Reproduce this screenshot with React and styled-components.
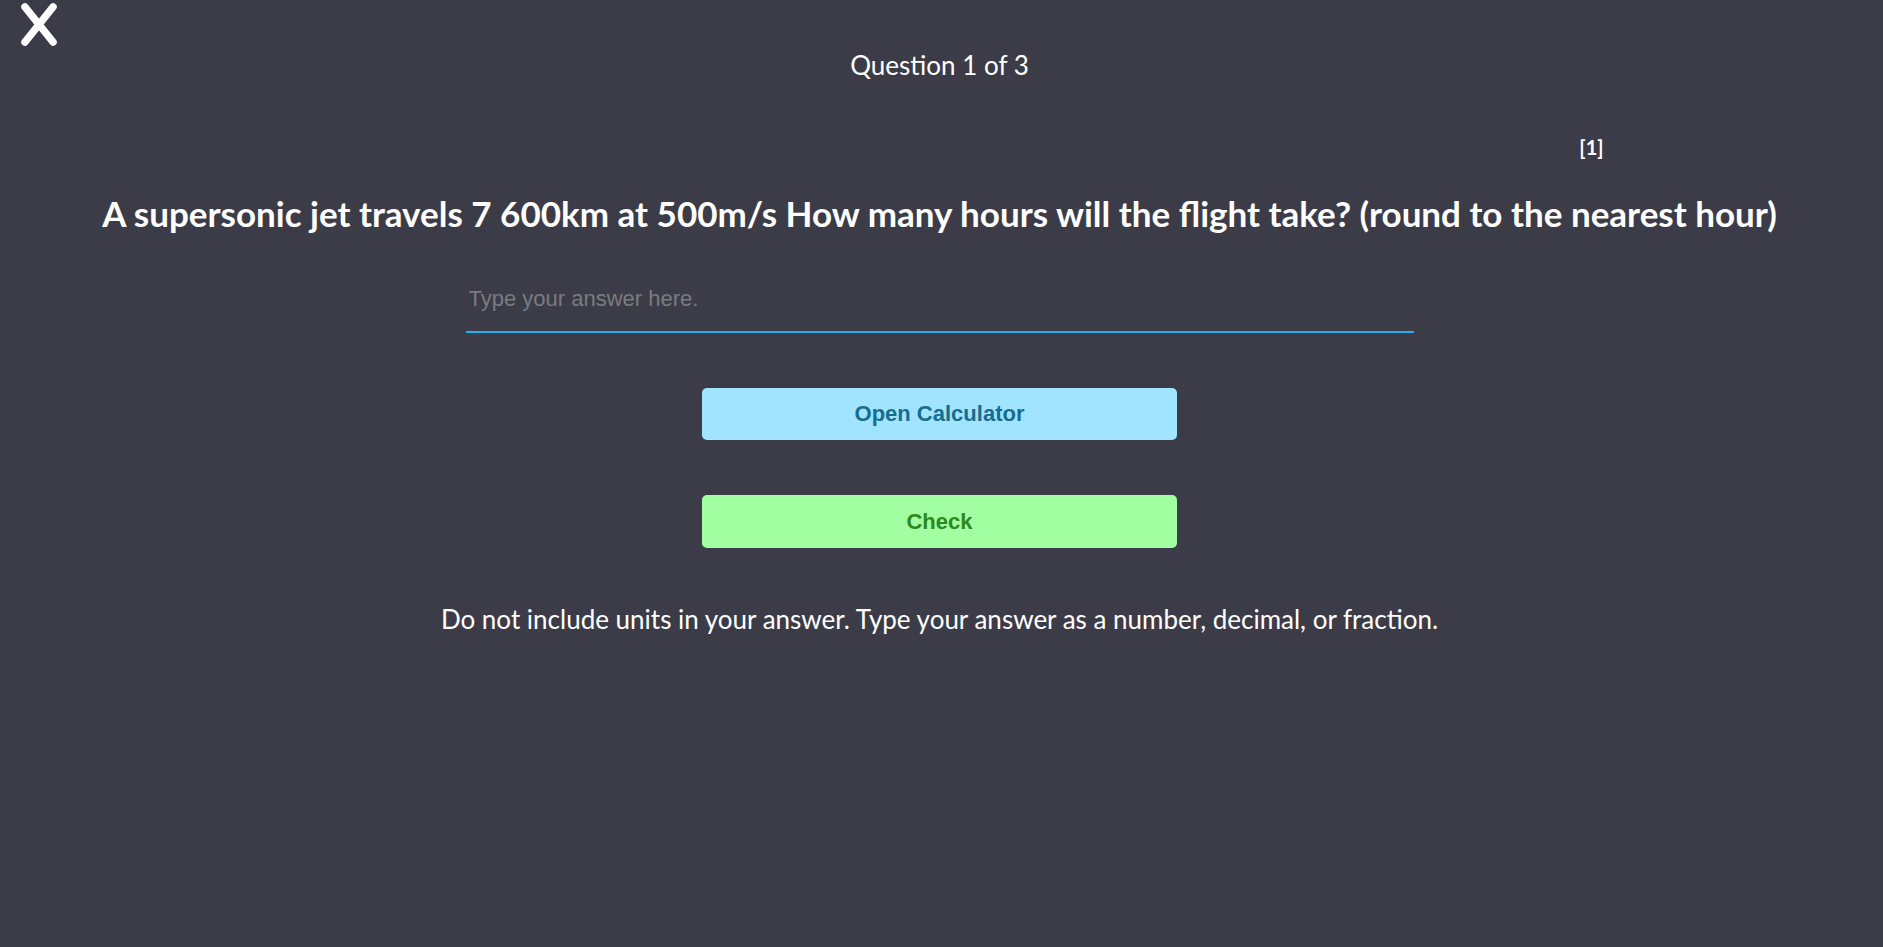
import React from "react";
import styled, { createGlobalStyle } from "styled-components";

const Global = createGlobalStyle`
  html, body { margin: 0; padding: 0; background: #3c3c48; }
  body { font-family: Lato, "Noto Sans", sans-serif; color: #ffffff; }
  * { box-sizing: border-box; }
`;

const Page = styled.div`
  min-height: 947px;
  padding-right: 4px;
  display: flex;
  flex-direction: column;
  align-items: center;
  background: #3c3c48;
`;

const CloseButton = styled.button`
  position: absolute;
  left: 19px;
  top: 2px;
  width: 40px;
  height: 44px;
  padding: 0;
  border: none;
  background: transparent;
  cursor: pointer;
  display: flex;
`;

const Counter = styled.div`
  margin-top: 50px;
  font-size: 26px;
  line-height: 31px;
  font-weight: 400;
`;

const MarksRow = styled.div`
  margin-top: 54px;
  width: 1328px;
  display: flex;
  justify-content: flex-end;
  font-size: 20px;
  line-height: 24px;
  font-weight: 700;
`;

const Heading = styled.h1`
  margin: 33px 0 0;
  font-size: 35px;
  line-height: 42px;
  font-weight: 700;
  text-align: center;
`;

const AnswerInput = styled.input`
  margin-top: 47px;
  width: 948px;
  height: 52px;
  padding: 0 3px 14px;
  border: none;
  border-bottom: 2px solid #1eb2f0;
  background: transparent;
  outline: none;
  color: #ffffff;
  font-family: "Liberation Sans", Arial, sans-serif;
  font-size: 22px;
  &::placeholder { color: #7b7b7f; }
`;

const ActionButton = styled.button`
  margin-top: ${(p) => p.$gap}px;
  width: 475px;
  height: ${(p) => p.$h}px;
  border: none;
  border-radius: 5px;
  background: ${(p) => p.$bg};
  color: ${(p) => p.$fg};
  font-family: "Liberation Sans", Arial, sans-serif;
  font-weight: 700;
  font-size: 22px;
  cursor: pointer;
`;

const Hint = styled.p`
  margin: 56px 0 0;
  font-size: 26px;
  line-height: 31px;
  text-align: center;
`;

export default function App() {
  return (
    <>
      <Global />
      <Page>
        <CloseButton aria-label="Close">
          <svg width="40" height="44" viewBox="0 0 40 44">
            <path d="M6 5 L34 40 M34 5 L6 40" stroke="#ffffff" strokeWidth="7.5" strokeLinecap="round" fill="none" />
          </svg>
        </CloseButton>
        <Counter>Question 1 of 3</Counter>
        <MarksRow>[1]</MarksRow>
        <Heading>A supersonic jet travels 7 600km at 500m/s How many hours will the flight take? (round to the nearest hour)</Heading>
        <AnswerInput placeholder="Type your answer here." />
        <ActionButton $gap={55} $h={52} $bg="#a0e4ff" $fg="#186c8e">Open Calculator</ActionButton>
        <ActionButton $gap={55} $h={53} $bg="#a2ffa2" $fg="#2a8a1c">Check</ActionButton>
        <Hint>Do not include units in your answer. Type your answer as a number, decimal, or fraction.</Hint>
      </Page>
    </>
  );
}
